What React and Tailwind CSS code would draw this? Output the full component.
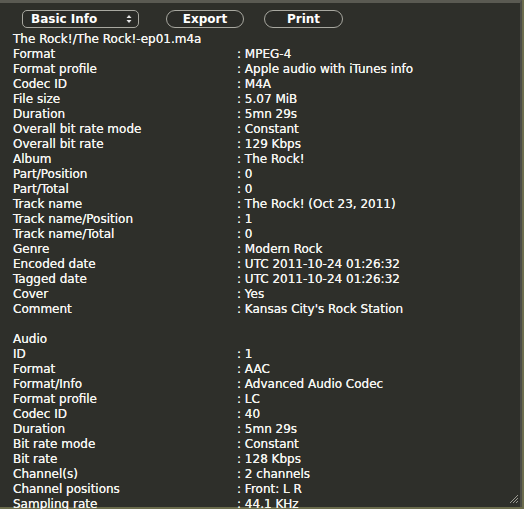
import React from 'react'

const GENERAL = [
  ['Format', 'MPEG-4'],
  ['Format profile', 'Apple audio with iTunes info'],
  ['Codec ID', 'M4A'],
  ['File size', '5.07 MiB'],
  ['Duration', '5mn 29s'],
  ['Overall bit rate mode', 'Constant'],
  ['Overall bit rate', '129 Kbps'],
  ['Album', 'The Rock!'],
  ['Part/Position', '0'],
  ['Part/Total', '0'],
  ['Track name', 'The Rock! (Oct 23, 2011)'],
  ['Track name/Position', '1'],
  ['Track name/Total', '0'],
  ['Genre', 'Modern Rock'],
  ['Encoded date', 'UTC 2011-10-24 01:26:32'],
  ['Tagged date', 'UTC 2011-10-24 01:26:32'],
  ['Cover', 'Yes'],
  ['Comment', "Kansas City's Rock Station"],
]

const AUDIO = [
  ['ID', '1'],
  ['Format', 'AAC'],
  ['Format/Info', 'Advanced Audio Codec'],
  ['Format profile', 'LC'],
  ['Codec ID', '40'],
  ['Duration', '5mn 29s'],
  ['Bit rate mode', 'Constant'],
  ['Bit rate', '128 Kbps'],
  ['Channel(s)', '2 channels'],
  ['Channel positions', 'Front: L R'],
  ['Sampling rate', '44.1 KHz'],
]

function Row({ label, value }) {
  return (
    <div className="flex h-[15px] items-center whitespace-nowrap">
      <span className="w-[224px] shrink-0">{label}</span>
      <span>: {value}</span>
    </div>
  )
}

export default function App() {
  return (
    <div
      className="relative w-[524px] h-[509px] overflow-hidden bg-[#6b6c4c]"
      style={{ fontFamily: '"DejaVu Sans", "Liberation Sans", sans-serif' }}
    >
      <div className="w-[522px] h-[507px] bg-[#2e2f2a] border-t-[3px] border-t-[#5a5a52] border-r-2 border-r-[#4c4d46] flex flex-col">
        {/* toolbar */}
        <div className="flex items-center h-[26px] pl-[22px] pt-[5px] gap-[27px] text-white text-[12px] font-bold shrink-0">
          <div className="w-[117px] h-[18px] rounded-[5px] border border-[#a8a8a0] bg-[#2a2b27] flex items-center justify-between pl-[8px] pr-[6px]">
            <span>Basic Info</span>
            <svg width="6" height="10" viewBox="0 0 6 10">
              <path d="M0.5 4 L3 1 L5.5 4 Z" fill="#e8e8e8" />
              <path d="M0.5 6 L3 9 L5.5 6 Z" fill="#e8e8e8" />
            </svg>
          </div>
          <div className="w-[78px] h-[18px] rounded-full border border-[#a8a8a0] bg-[#2a2b27] flex items-center justify-center">
            Export
          </div>
          <div className="w-[79px] h-[18px] rounded-full border border-[#a8a8a0] bg-[#2a2b27] flex items-center justify-center -ml-[7px]">
            Print
          </div>
        </div>

        {/* info text */}
        <div className="pl-[13px] pt-[3px] text-[12px] text-[#f4f4f0] leading-[15px] [text-shadow:0_0_0.5px_#ffffff]">
          <div className="h-[15px] flex items-center whitespace-nowrap">The Rock!/The Rock!-ep01.m4a</div>
          {GENERAL.map(([l, v]) => (
            <Row key={'g' + l} label={l} value={v} />
          ))}
          <div className="h-[15px]" />
          <div className="h-[15px] flex items-center">Audio</div>
          {AUDIO.map(([l, v]) => (
            <Row key={'a' + l} label={l} value={v} />
          ))}
        </div>
      </div>

      {/* resize grip */}
      <svg className="absolute right-[5px] bottom-[5px]" width="10" height="10" viewBox="0 0 10 10">
        <path d="M1 9 L9 1 M4 9 L9 4 M7 9 L9 7" stroke="#9a9a92" strokeWidth="1" />
      </svg>
    </div>
  )
}
